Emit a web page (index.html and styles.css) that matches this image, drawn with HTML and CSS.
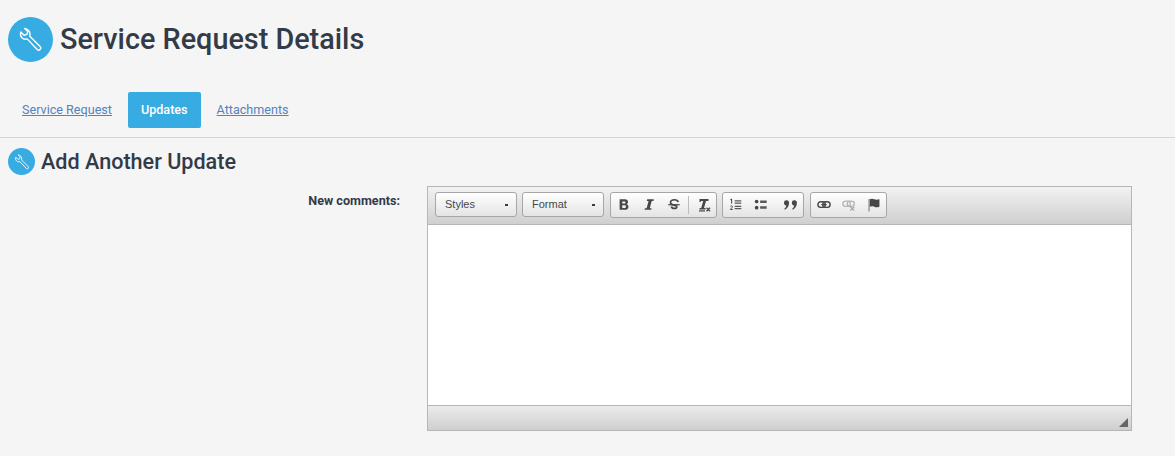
FILE: index.html
```html
<!DOCTYPE html>
<html lang="en">
<head>
<meta charset="utf-8">
<title>Service Request Details</title>
<link rel="stylesheet" href="styles.css">
</head>
<body>
<svg class="defs" width="0" height="0" aria-hidden="true">
  <symbol id="wrench" viewBox="0 0 24 24">
    <path d="M6.200 1.300 9.300 4.400 8.600 7.100 5.800 7.900 2.700 4.800C2 7 2.400 9 3.800 10.400 5.200 11.700 7 12 8.800 11.400L18.400 21.600C19.200 22.400 20.400 22.400 21.200 21.600 22 20.800 22 19.600 21.200 18.800L11.300 8.900C11.900 6.800 11.500 4.800 10.100 3.300 9 2.100 7.700 1.400 6.200 1.300Z" fill="none" stroke="currentColor" stroke-width="1.300" stroke-linejoin="round"/>
  </symbol>
</svg>

<header class="page-head">
  <span class="badge badge-lg"><svg class="wrench-lg"><use href="#wrench"/></svg></span>
  <h1>Service Request Details</h1>
</header>

<nav class="tabs">
  <a class="tab" href="#">Service Request</a>
  <a class="tab tab-active" href="#">Updates</a>
  <a class="tab" href="#">Attachments</a>
</nav>

<section class="section">
  <div class="section-head">
    <span class="badge badge-sm"><svg class="wrench-sm"><use href="#wrench"/></svg></span>
    <h2>Add Another Update</h2>
  </div>

  <div class="form-row">
    <label class="form-label">New comments:</label>
    <div class="editor">
      <div class="toolbar">
        <div class="combo"><span>Styles</span><i class="caret"></i></div>
        <div class="combo"><span>Format</span><i class="caret"></i></div>

        <div class="group group-shift">
          <button class="tool" type="button"><svg width="14" height="14" viewBox="0 0 16 16"><path d="M3 1.500H9c2.300 0 3.600 1.100 3.600 3 0 1.200-.7 2.100-1.700 2.500 1.400.4 2.200 1.400 2.200 2.900 0 2.300-1.600 3.600-4 3.600H3ZM6 3.900v2.400h2.400c.8 0 1.300-.45 1.300-1.200S9.200 3.900 8.400 3.900ZM6 8.400v3h2.700c.9 0 1.500-.55 1.500-1.500S9.600 8.400 8.700 8.400Z" fill="#474747" fill-rule="evenodd"/></svg></button>
          <button class="tool" type="button"><svg width="14" height="14" viewBox="0 0 16 16"><path d="M6 1.500h7.500l-.4 1.900h-2L8.900 11.600h2l-.4 1.900H2.900l.4-1.900h2l2.200-8.200h-2Z" fill="#474747"/></svg></button>
          <button class="tool" type="button"><svg width="14" height="14" viewBox="0 0 16 16"><path d="M12.800 4.600C12.300 2.800 10.700 2 8.500 2 6 2 4 3.100 4 5.100c0 1.900 1.700 2.500 4 3 2.300.5 3.200 1 3.200 2.100 0 1.100-1.100 1.700-2.800 1.700-1.800 0-3.100-.7-3.500-2.200" fill="none" stroke="#474747" stroke-width="1.900"/><rect x="1.500" y="7" width="13" height="1.400" fill="#474747"/></svg></button>
          <span class="divider"></span>
          <button class="tool" type="button"><svg width="16" height="16" viewBox="0 0 16 16"><path d="M3.500 2h9v2H10L8 11h1.500v1.500H3.500V11h1.700l2-7H5.200l-.5 1H3.500Z" fill="#474747"/><rect x="3" y="13.300" width="6" height="1.200" fill="#474747"/><path d="m10.500 10.800 3.500 3.500m0-3.500-3.500 3.500" stroke="#474747" stroke-width="1.300"/></svg></button>
        </div>

        <div class="group">
          <button class="tool" type="button"><svg width="14" height="14" viewBox="0 0 16 16"><path d="M6.500 2.500h7.500v1.500H6.500Zm0 2.500h7.500v1.500H6.500Zm0 3.800h7.500v1.500H6.500Zm0 2.500h7.500v1.500H6.500Z" fill="#5a5a5a"/><path d="M3 1v5.300M1.700 2.200 3 1" stroke="#474747" stroke-width="1.200" fill="none"/><path d="M1.500 9.600c.3-.8 2.500-.8 2.500.3 0 1-1.600 1.500-2.400 3.200H4.400" stroke="#474747" stroke-width="1.100" fill="none"/></svg></button>
          <button class="tool" type="button"><svg width="14" height="14" viewBox="0 0 16 16"><circle cx="3" cy="4" r="2.100" fill="#474747"/><circle cx="3" cy="11" r="2.100" fill="#474747"/><path d="M7 2.800h7.500v1.500H7Zm0 1.500h7.500v1.300H7Zm0 5.200h7.500V11H7Zm0 1.500h7.500V12.300H7Z" fill="#5a5a5a"/></svg></button>
          <button class="tool tool-wide" type="button"><svg width="15" height="15" viewBox="0 0 16 16"><path d="M1 5a2.700 2.700 0 1 1 5.400.3c0 3.200-1.700 5.900-4.300 7.200l-.7-1C2.700 10.400 3.500 9.300 3.700 8.100 2.100 8 1 6.700 1 5Zm8.400 0a2.700 2.700 0 1 1 5.400.3c0 3.200-1.700 5.900-4.300 7.200l-.7-1c1.300-1.100 2.100-2.200 2.300-3.400C10.500 8 9.400 6.700 9.400 5Z" fill="#474747"/></svg></button>
        </div>

        <div class="group group-shift">
          <button class="tool" type="button"><svg width="14" height="14" viewBox="0 0 16 16"><rect x="1" y="4.300" width="8.500" height="6.400" rx="3.200" fill="none" stroke="#474747" stroke-width="1.600"/><rect x="6.500" y="4.300" width="8.500" height="6.400" rx="3.200" fill="none" stroke="#474747" stroke-width="1.600"/><rect x="5" y="6.800" width="6" height="1.400" fill="#474747"/></svg></button>
          <button class="tool" type="button"><svg width="14" height="14" viewBox="0 0 16 16"><rect x="1" y="3.500" width="8.500" height="6" rx="3" fill="none" stroke="#b4b4b4" stroke-width="1.500"/><rect x="6" y="3.500" width="8" height="6" rx="3" fill="none" stroke="#b4b4b4" stroke-width="1.500"/><path d="m9.500 10 4.500 4.500m0-4.500-4.500 4.500" stroke="#a4a4a4" stroke-width="1.300"/></svg></button>
          <button class="tool" type="button"><svg width="14" height="14" viewBox="0 0 16 16"><path d="M1.500 1h1.700v14.500H1.500Z" fill="#9a9a9a"/><path d="M3.200 1.500c1.700-.8 3.200-.8 5 0 1.900.7 3.500.7 6 0v8.500c-2.500.8-4.100.8-6 0-1.800-.7-3.300-.7-5 .1Z" fill="#474747"/></svg></button>
        </div>
      </div>
      <div class="edit-area"></div>
      <div class="statusbar"><i class="resizer"></i></div>
    </div>
  </div>
</section>
</body>
</html>
```

FILE: styles.css
```css
* { box-sizing: border-box; }

html, body { height: 100%; }

body {
  margin: 0;
  background: #f5f5f5;
  color: #333a48;
  font-family: Roboto, sans-serif;
  overflow: hidden;
}

.defs { display: block; height: 0; }

.page-head {
  display: flex;
  align-items: flex-start;
  gap: 7px;
  padding: 17px 8px 0;
  height: 92px;
}

.badge {
  display: inline-flex;
  align-items: center;
  justify-content: center;
  flex: none;
  border-radius: 50%;
  background: #36ace2;
  color: #fff;
}

.badge-lg { width: 45px; height: 45px; }
.badge-sm { width: 27px; height: 27px; }
.wrench-lg { width: 25px; height: 25px; }
.wrench-sm { width: 16px; height: 16px; }

h1 {
  margin: 0;
  font-size: 28.800px;
  line-height: 45px;
  font-weight: 500;
}

.tabs {
  display: flex;
  gap: 3px;
  height: 46px;
  padding: 0 0 0 9px;
  border-bottom: 1px solid #d5d5d5;
}

.tab {
  height: 36px;
  padding: 0 13px;
  font-size: 12.600px;
  line-height: 36px;
  color: #5482bd;
  border-radius: 2px;
}

.tab-active {
  background: #36ace2;
  color: #fff;
  font-weight: 500;
  text-decoration: none;
}

.section { padding: 10px 8px 0; }

.section-head {
  display: flex;
  align-items: center;
  gap: 6px;
  height: 27px;
}

h2 {
  margin: -1px 0 0;
  font-size: 21.600px;
  line-height: 27px;
  font-weight: 500;
}

.form-row {
  display: flex;
  margin-top: 11px;
  padding-right: 35px;
}

.form-label {
  width: 392px;
  padding-top: 7px;
  text-align: right;
  font-size: 12.600px;
  line-height: 15px;
  font-weight: 700;
}

.editor {
  width: 705px;
  margin-left: 27px;
  height: 245px;
  display: flex;
  flex-direction: column;
  border: 1px solid #b6b6b6;
}

.toolbar {
  display: flex;
  align-items: flex-start;
  gap: 5px;
  height: 38px;
  padding: 5px 0 0 7px;
  background: linear-gradient(#f2f2f2, #cfcfcf);
  border-bottom: 1px solid #b6b6b6;
}

.combo {
  display: flex;
  align-items: center;
  justify-content: space-between;
  width: 82px;
  height: 25px;
  padding: 0 8px 2px 9px;
  font-family: "Liberation Sans", Arial, sans-serif;
  font-size: 11px;
  color: #484848;
  background: linear-gradient(#fff, #e4e4e4);
  border: 1px solid #a6a6a6;
  border-radius: 3px;
}

.caret {
  width: 3px;
  height: 2px;
  margin-top: 2px;
  background: #3c3c3c;
}

.group {
  display: flex;
  align-items: center;
  height: 26px;
  background: linear-gradient(#fff, #e4e4e4);
  border: 1px solid #a6a6a6;
  border-radius: 3px;
}

.group-shift { margin-left: 1px; }

.tool {
  display: flex;
  align-items: center;
  justify-content: center;
  width: 25px;
  height: 24px;
  padding: 0;
  border: 0;
  background: none;
}

.tool-wide { width: 30px; padding-left: 5px; }

.divider {
  width: 1px;
  height: 18px;
  margin: 0 2px;
  background: #bcbcbc;
}

.edit-area {
  flex: 1;
  background: #fff;
}

.statusbar {
  position: relative;
  height: 25px;
  background: linear-gradient(#ebebeb, #cfcfcf);
  border-top: 1px solid #b6b6b6;
}

.resizer {
  position: absolute;
  right: 3px;
  bottom: 3px;
  width: 0;
  height: 0;
  border-bottom: 9px solid #666;
  border-left: 9px solid transparent;
}
```
